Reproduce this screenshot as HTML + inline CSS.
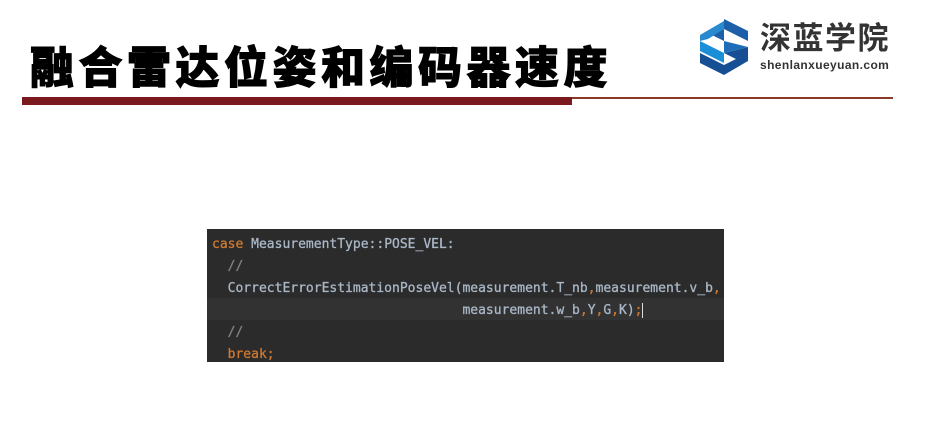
<!DOCTYPE html>
<html><head><meta charset="utf-8"><style>
body{margin:0;width:930px;height:427px;background:#fff;position:relative;overflow:hidden;font-family:"Liberation Sans","Noto Sans CJK SC",sans-serif}
.t{position:absolute;left:30px;top:36px;font-size:44px;font-weight:900;letter-spacing:4.5px;color:#000;font-family:"Noto Sans CJK SC","WenQuanYi Zen Hei",sans-serif;line-height:56px;-webkit-text-stroke:1px #000}
.bar{position:absolute;left:22px;top:97px;width:550px;height:8px;background:#7a1a1f}
.ln{position:absolute;left:572px;top:97px;width:321px;height:2px;background:#8b3a2a}
.code{position:absolute;left:207px;top:229px;width:517px;height:133px;background:#2b2b2b;font-family:"DejaVu Sans Mono","Liberation Mono",monospace;font-size:13px;color:#a9b7c6;overflow:hidden;-webkit-text-stroke:0.3px currentColor}
.l{position:absolute;left:5px;height:22px;line-height:22px;white-space:pre}
.k{color:#cc7832}.c{color:#808080}
.hl{position:absolute;left:0;top:69px;width:517px;height:22px;background:#323232}
</style></head><body>
<div class="t">融合雷达位姿和编码器速度</div>
<div class="bar"></div><div class="ln"></div>
<svg style="position:absolute;left:698px;top:17px" width="54" height="60" viewBox="0 0 54 60">
<polygon points="26,2 50,14 50,24 26,12 14,18 26,24 26,34" fill="#1d5fa8"/>
<polygon points="2,18 26,4 26,12 10,22 2,24" fill="#2a8ad0"/>
<polygon points="2,24 26,36 26,46 2,34" fill="#1a8fd8"/>
<polygon points="26,36 50,30 50,44 26,58 2,46 2,36 26,48 38,42" fill="#174f95"/>
<polygon points="26,24 50,30 26,36" fill="#1d6db8"/>
</svg>
<div style="position:absolute;left:760px;top:17px;font-size:31px;font-weight:bold;color:#333;letter-spacing:1.5px;font-family:'Noto Sans CJK SC',sans-serif;line-height:38px">深蓝学院</div>
<div style="position:absolute;left:760px;top:58px;font-size:12px;font-weight:bold;color:#333;letter-spacing:0.4px">shenlanxueyuan.com</div>
<div class="code"><div class="hl"></div>
<div class="l" style="top:5px"><span class="k">case</span> MeasurementType::POSE_VEL:</div>
<div class="l" style="top:27px"><span class="c">  //</span></div>
<div class="l" style="top:49px">  CorrectErrorEstimationPoseVel(measurement.T_nb<span class="k">,</span>measurement.v_b<span class="k">,</span></div>
<div class="l" style="top:71px">                                measurement.w_b<span class="k">,</span>Y<span class="k">,</span>G<span class="k">,</span>K)<span class="k">;</span><span style="border-left:1px solid #ddd"></span></div>
<div class="l" style="top:93px"><span class="c">  //</span></div>
<div class="l" style="top:115px"><span class="k">  break;</span></div>
</div>
</body></html>
